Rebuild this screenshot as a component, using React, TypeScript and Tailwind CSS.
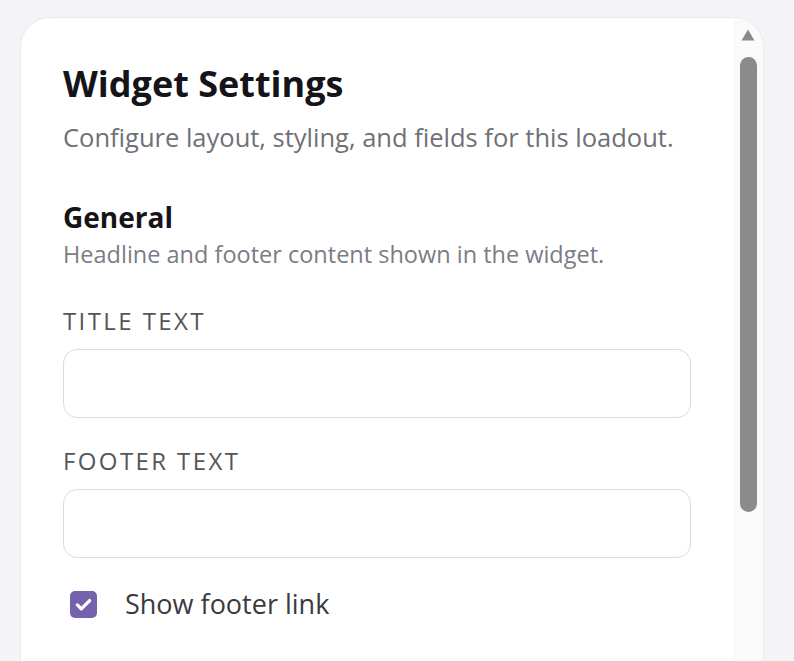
import { useState } from 'react';

function Field({ label, className }: { label: string; className?: string }) {
  return (
    <div className={className}>
      <label className="block text-[24px] leading-[30px] tracking-[0.1em] uppercase text-[#555559]">{label}</label>
      <input
        type="text"
        className="mt-[13px] block h-[69px] w-full rounded-[14px] border-[1.5px] border-[#dcdcdf] bg-white px-4 text-[24px] outline-none"
      />
    </div>
  );
}

export default function App() {
  const [showLink, setShowLink] = useState(true);

  return (
    <div className="h-[661px] overflow-hidden bg-[#f3f3f8] pl-[20px] pr-[30px] pt-[17px] font-['Open_Sans',sans-serif]">
      <div className="flex h-[720px] overflow-hidden rounded-[30px] border border-[#e9e9ee] bg-white">
        <div className="flex-1 px-[42px] pt-[44px]">
          <h1 className="text-[36px] font-bold leading-[44px] text-[#151519]">Widget Settings</h1>
          <p className="mt-[15px] text-[25.5px] leading-[32px] text-[#707077]">Configure layout, styling, and fields for this loadout.</p>

          <h2 className="mt-[46px] text-[28px] font-bold leading-[36px] text-[#151519]">General</h2>
          <p className="mt-[4px] text-[23.5px] leading-[30px] text-[#7c7c84]">Headline and footer content shown in the widget.</p>

          <Field label="Title Text" className="mt-[37px]" />
          <Field label="Footer Text" className="mt-[28px]" />

          <button
            type="button"
            onClick={() => setShowLink(!showLink)}
            className="mt-[30px] ml-[7px] flex items-center gap-[28px]"
          >
            <span className={`flex h-[27px] w-[27px] items-center justify-center rounded-[5px] ${showLink ? 'bg-[#7462ad]' : 'border-2 border-[#999] bg-white'}`}>
              {showLink && (
                <svg viewBox="0 0 24 24" className="h-[21px] w-[21px]" fill="none" stroke="white" strokeWidth="3.8" strokeLinecap="round" strokeLinejoin="round">
                  <path d="M5 12.5l4.5 4.5L19 7.5" />
                </svg>
              )}
            </span>
            <span className="text-[27px] leading-[32px] text-[#3a3a40]">Show footer link</span>
          </button>
        </div>

        {/* scrollbar */}
        <div className="flex w-[30px] flex-col items-center bg-[#fafafa] pt-[11px]">
          <svg viewBox="0 0 14 12" className="h-[12px] w-[14px]">
            <path d="M7 0.5 L13.5 11.5 H0.5 Z" fill="#8a8a8a" />
          </svg>
          <div className="mt-[16px] h-[455px] w-[17px] rounded-full bg-[#8b8b8b]" />
        </div>
      </div>
    </div>
  );
}
